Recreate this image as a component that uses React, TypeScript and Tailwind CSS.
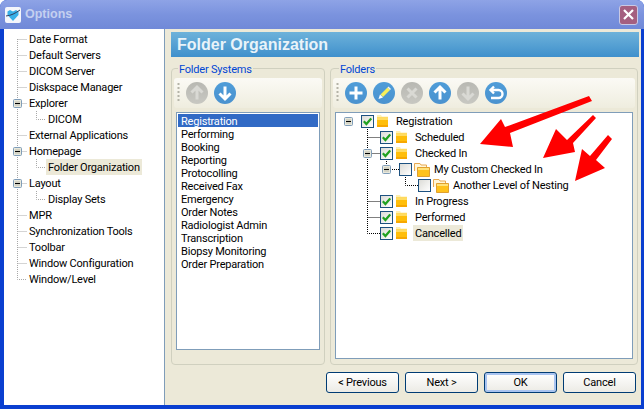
import type { ReactNode } from 'react';

type NavRow = { label: string; lines: string; expander?: boolean; level?: number; selected?: boolean };

const navRows: NavRow[] = [
  { label: 'Date Format', lines: 'M13.5 8V16M13.5 8.5H23' },
  { label: 'Default Servers', lines: 'M13.5 0V16M13.5 8.5H23' },
  { label: 'DICOM Server', lines: 'M13.5 0V16M13.5 8.5H23' },
  { label: 'Diskspace Manager', lines: 'M13.5 0V16M13.5 8.5H23' },
  { label: 'Explorer', lines: 'M13.5 0V16M13.5 8.5H23', expander: true },
  { label: 'DICOM', lines: 'M13.5 0V16M32.5 0V8.5H42', level: 1 },
  { label: 'External Applications', lines: 'M13.5 0V16M13.5 8.5H23' },
  { label: 'Homepage', lines: 'M13.5 0V16M13.5 8.5H23', expander: true },
  { label: 'Folder Organization', lines: 'M13.5 0V16M32.5 0V8.5H42', level: 1, selected: true },
  { label: 'Layout', lines: 'M13.5 0V16M13.5 8.5H23', expander: true },
  { label: 'Display Sets', lines: 'M13.5 0V16M32.5 0V8.5H42', level: 1 },
  { label: 'MPR', lines: 'M13.5 0V16M13.5 8.5H23' },
  { label: 'Synchronization Tools', lines: 'M13.5 0V16M13.5 8.5H23' },
  { label: 'Toolbar', lines: 'M13.5 0V16M13.5 8.5H23' },
  { label: 'Window Configuration', lines: 'M13.5 0V16M13.5 8.5H23' },
  { label: 'Window/Level', lines: 'M13.5 0V8.5H23' },
];

const folderSystems = [
  'Registration',
  'Performing',
  'Booking',
  'Reporting',
  'Protocolling',
  'Received Fax',
  'Emergency',
  'Order Notes',
  'Radiologist Admin',
  'Transcription',
  'Biopsy Monitoring',
  'Order Preparation',
];

type FolderRow = {
  label: string;
  gutter: number;
  lines: string;
  expanderX?: number;
  checked: boolean;
  open?: boolean;
  selected?: boolean;
};

const folderRows: FolderRow[] = [
  { label: 'Registration', gutter: 25, lines: '', expanderX: 12, checked: true },
  { label: 'Scheduled', gutter: 44, lines: 'M31.5 0V16M31.5 8.5H44', checked: true },
  { label: 'Checked In', gutter: 44, lines: 'M31.5 0V16M31.5 8.5H44', expanderX: 31, checked: true },
  { label: 'My Custom Checked In', gutter: 63, lines: 'M31.5 0V16M50.5 0V8.5H63', expanderX: 50, checked: false, open: true },
  { label: 'Another Level of Nesting', gutter: 82, lines: 'M31.5 0V16M69.5 0V8.5H82', checked: false, open: true },
  { label: 'In Progress', gutter: 44, lines: 'M31.5 0V16M31.5 8.5H44', checked: true },
  { label: 'Performed', gutter: 44, lines: 'M31.5 0V16M31.5 8.5H44', checked: true },
  { label: 'Cancelled', gutter: 44, lines: 'M31.5 0V8.5H44', checked: true, selected: true },
];

function Gutter({ width, lines, expanderX, color }: { width: number; lines: string; expanderX?: number; color: string }) {
  return (
    <svg width={width} height={16} className="shrink-0">
      <path d={lines} fill="none" stroke={color} strokeDasharray="1 1" />
      {expanderX !== undefined && (
        <g>
          <rect x={expanderX - 4 + 0.5} y={4.5} width={8} height={8} rx={1} fill="#e8e8dc" stroke="#7f9db9" />
          <rect x={expanderX - 3 + 1} y={6} width={5} height={5} fill="#d2d2c4" />
          <path d={`M${expanderX - 2} 8.5H${expanderX + 3}`} stroke="#000" />
        </g>
      )}
    </svg>
  );
}

function Checkbox({ checked }: { checked: boolean }) {
  return (
    <span className="flex h-[13px] w-[13px] shrink-0 items-center justify-center border border-[#1c5180] bg-gradient-to-br from-[#dcdcd7] to-[#ffffff]">
      {checked && (
        <svg width="9" height="9" viewBox="0 0 9 9">
          <path d="M0.8 4.2 3.4 7 8.2 1.4" fill="none" stroke="#21a121" strokeWidth="2.2" />
        </svg>
      )}
    </span>
  );
}

function FolderIcon({ open }: { open?: boolean }) {
  if (open) {
    return (
      <svg width="16" height="15" viewBox="0 0 16 15" className="ml-[2px] shrink-0">
        <path d="M0.5 9V1.5H6l1 1.5h5.5V6" fill="#fff6d8" stroke="#e8a850" />
        <path d="M3.5 5.5H15.5V14.5H3.5Z" fill="#ffc21c" stroke="#e0a030" />
        <path d="M4 6H15V8H4Z" fill="#ffe27a" />
      </svg>
    );
  }
  return (
    <svg width="11" height="12" viewBox="0 0 11 12" className="ml-[3px] shrink-0">
      <path d="M0 0h4l1 1.5h6V4H0Z" fill="#fff0b0" />
      <rect y="2.5" width="11" height="9.5" fill="#ffbe0a" />
      <rect y="2.5" width="11" height="2.5" fill="#ffdc62" />
      <rect y="10" width="11" height="2" fill="#f7a800" />
    </svg>
  );
}

type Glyph = 'plus' | 'pencil' | 'x' | 'up' | 'down' | 'undo';

function RoundIcon({ glyph, disabled }: { glyph: Glyph; disabled?: boolean }) {
  const id = disabled ? 'orb-off' : 'orb-on';
  return (
    <svg width="22" height="22" viewBox="0 0 22 22" className="shrink-0">
      <defs>
        <linearGradient id={id} x1="0" y1="0" x2="0" y2="1">
          <stop offset="0" stopColor={disabled ? '#b8b8b2' : '#4f9dd8'} />
          <stop offset="1" stopColor={disabled ? '#c8c8c2' : '#4a92cf'} />
        </linearGradient>
      </defs>
      <circle cx="11" cy="11" r="11" fill={`url(#${id})`} />
      <g fill="none" stroke={disabled ? '#d9d9d4' : '#fff'} strokeWidth="3" strokeLinecap="butt">
        {glyph === 'plus' && <path d="M11 4.5V17.5M4.5 11H17.5" />}
        {glyph === 'x' && <path d="M6.5 6.5 15.5 15.5M15.5 6.5 6.5 15.5" />}
        {glyph === 'up' && <path d="M11 17.5V6.5M5.5 10.5 11 5l5.5 5.5" />}
        {glyph === 'down' && <path d="M11 4.5V15.5M5.5 11.5 11 17l5.5-5.5" />}
        {glyph === 'undo' && (
          <path d="M6 8H13.5a3.5 3.5 0 0 1 0 8H6M9 4.5 5.5 8 9 11.5" strokeWidth="2.4" />
        )}
      </g>
      {glyph === 'pencil' && (
        <g>
          <path d="M7.5 12.5 14.5 5.5 17 8l-7 7Z" fill="#f8ef5a" />
          <path d="M5.5 17 7 12.5 10 15.5Z" fill="#fff" />
          <path d="M14.5 5.5 15.5 4.5 18 7 17 8Z" fill="#f6f6f0" />
        </g>
      )}
    </svg>
  );
}

function Toolbar({ children }: { children: ReactNode }) {
  return (
    <div className="mx-[2px] flex h-[30px] items-center gap-[6px] rounded-[3px] bg-gradient-to-b from-[#fbfaf5] to-[#efeddf] pl-[3px]">
      <svg width="3" height="20" className="shrink-0">
        <path d="M1.5 0V20" stroke="#b5b4a8" strokeWidth="2" strokeDasharray="2 2" />
      </svg>
      {children}
    </div>
  );
}

function Group({
  title,
  className,
  legendClassName,
  children,
}: {
  title: string;
  className: string;
  legendClassName: string;
  children: ReactNode;
}) {
  return (
    <fieldset className={`rounded-[4px] border border-[#d0d0bf] ${className}`}>
      <legend className={`h-[13px] px-[1px] text-[11px] leading-[15px] text-[#0046d5] ${legendClassName}`}>{title}</legend>
      {children}
    </fieldset>
  );
}

function DialogButton({ label, isDefault }: { label: string; isDefault?: boolean }) {
  return (
    <button
      className={`h-[21px] w-[73px] rounded-[3px] border border-[#003c74] bg-gradient-to-b from-[#ffffff] to-[#ecebe5] pt-px text-[11px] text-black ${
        isDefault ? 'shadow-[inset_0_0_0_2px_#a9c4f0]' : ''
      }`}
    >
      {label}
    </button>
  );
}

export default function App() {
  return (
    <div className="relative flex h-[409px] w-[644px] flex-col overflow-hidden rounded-t-[7px] bg-[#0a3fd0] font-['Roboto',sans-serif] text-[11px] tracking-[-0.2px] text-black">
      {/* Title bar */}
      <div className="flex h-[29px] shrink-0 items-center justify-between bg-gradient-to-b from-[#8ea3e6] via-[#7b93de] to-[#7089d8] pl-[5px] pr-[6px]">
        <div className="flex items-center gap-[4px]">
          <svg width="16" height="16" viewBox="0 0 16 16">
            <rect width="16" height="16" rx="2" fill="#f4f6fb" />
            <path d="M8 14 2.5 8V4.5L5 3l3 1.5L11 3l2.5 1.5V8Z" fill="#38b0e8" />
            <path d="M1 9C6 8.5 10 6.5 15 3" fill="none" stroke="#33405f" />
          </svg>
          <span className="font-['Liberation_Sans',sans-serif] text-[12.5px] font-bold tracking-normal text-[#c4d0f0]">Options</span>
        </div>
        <div className="flex h-[20px] w-[19px] items-center justify-center rounded-[3px] border border-[#c9c9e4] bg-[#a45f80]">
          <svg width="11" height="11" viewBox="0 0 11 11">
            <path d="M1 1 10 10M10 1 1 10" stroke="#fff" strokeWidth="2.2" />
          </svg>
        </div>
      </div>

      <div className="flex min-h-0 flex-1 pb-[4px] pl-[4px] pr-[3px]">
        {/* Options tree */}
        <aside className="w-[161px] shrink-0 border-r border-[#7f9db9] bg-white pt-[2px]">
          {navRows.map((row) => (
            <div key={row.label} className="flex h-[16px] items-center">
              <Gutter
                width={row.level ? 42 : 23}
                lines={row.lines}
                expanderX={row.expander ? 13 : undefined}
                color="#a8a8a8"
              />
              <span className={`h-[16px] px-[2px] leading-[18px] ${row.selected ? 'bg-[#ece9d8]' : ''}`}>{row.label}</span>
            </div>
          ))}
        </aside>

        <main className="min-w-0 flex-1 bg-[#ece9d8] pl-[6px] pr-[2px] pt-[3px]">
          <div className="flex h-[25px] items-center bg-gradient-to-b from-[#6db2da] to-[#3f90cc] pl-[6px] font-['Liberation_Sans',sans-serif] text-[16px] font-bold tracking-normal text-[#e9f3f9]">
            Folder Organization
          </div>

          <div className="mt-[5px] flex gap-[5px]">
            <Group title="Folder Systems" className="h-[303px] w-[154px]" legendClassName="ml-[6px]">
              <div className="mt-[3px]">
                <Toolbar>
                  <RoundIcon glyph="up" disabled />
                  <RoundIcon glyph="down" />
                </Toolbar>
              </div>
              <div className="mx-[4px] mt-[4px] h-[238px] border border-[#7f9db9] bg-white p-px">
                {folderSystems.map((name, i) => (
                  <div
                    key={name}
                    className={`h-[13px] px-[3px] leading-[15px] ${i === 0 ? 'bg-[#316ac5] text-white' : ''}`}
                  >
                    {name}
                  </div>
                ))}
              </div>
            </Group>

            <Group title="Folders" className="h-[303px] w-[308px]" legendClassName="ml-[8px]">
              <div className="mt-[3px]">
                <Toolbar>
                  <RoundIcon glyph="plus" />
                  <RoundIcon glyph="pencil" />
                  <RoundIcon glyph="x" disabled />
                  <RoundIcon glyph="up" />
                  <RoundIcon glyph="down" disabled />
                  <RoundIcon glyph="undo" />
                </Toolbar>
              </div>
              <div className="mx-[4px] mt-[4px] h-[247px] border border-[#7f9db9] bg-white">
                {folderRows.map((row) => (
                  <div key={row.label} className="flex h-[16px] items-center">
                    <Gutter width={row.gutter} lines={row.lines} expanderX={row.expanderX} color="#000" />
                    <Checkbox checked={row.checked} />
                    <FolderIcon open={row.open} />
                    <span
                      className={`h-[16px] px-[2px] leading-[18px] ${row.open ? 'ml-[2px]' : 'ml-[6px]'} ${
                        row.selected ? 'bg-[#ece9d8]' : ''
                      }`}
                    >
                      {row.label}
                    </span>
                  </div>
                ))}
              </div>
            </Group>
          </div>

          <div className="mt-[7px] flex justify-end gap-[6px] pr-[3px]">
            <DialogButton label="< Previous" />
            <DialogButton label="Next >" />
            <DialogButton label="OK" isDefault />
            <DialogButton label="Cancel" />
          </div>
        </main>
      </div>

      {/* Red annotation arrows drawn over the screenshot */}
      <svg width="644" height="409" className="pointer-events-none absolute left-0 top-0">
        <g fill="#ff0000">
          <polygon points="589,96 592,101 510,133 513,147 480,144 501,119 505,127" />
          <polygon points="593,115 596,118 573,143 575,152 543,158 556,129 567,140" />
          <polygon points="608,135 612,139 596,160 605,168 575,181 582,149 590,156" />
        </g>
      </svg>
    </div>
  );
}
